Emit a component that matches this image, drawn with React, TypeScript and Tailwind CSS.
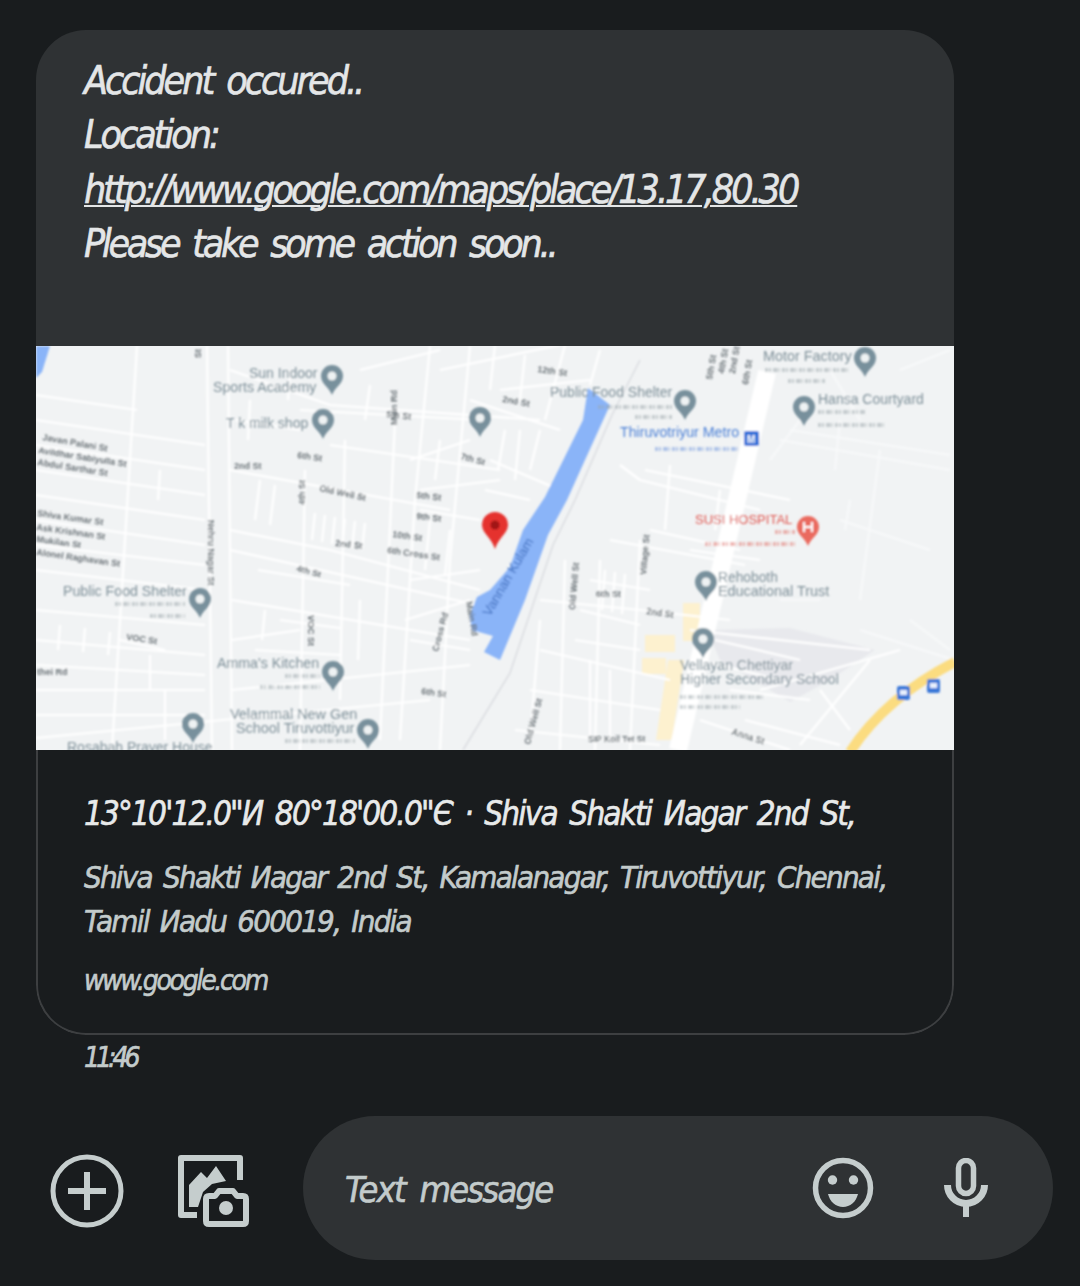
const cond = "font-['DejaVu_Sans','Liberation_Sans',sans-serif] italic [font-stretch:condensed]";

const roads: string[] = [
  "M137 346L112 750", "M207 346L212 750", "M228 346L232 750", "M305 470L300 750", "M345 440L340 700", "M395 420L380 740",
  "M430 346L415 500L400 740", "M470 346L450 560L440 750", "M36 395L137 410", "M36 420L137 435L205 445", "M36 445L205 470", "M36 470L205 495",
  "M36 495L205 520", "M36 520L205 545", "M36 545L205 565", "M36 570L205 590", "M36 610L205 625", "M36 640L205 655", "M36 665L205 675",
  "M36 690L205 690", "M36 715L205 715", "M36 738L430 700", "M230 370L330 405L540 420", "M230 470L450 510", "M230 530L330 550L480 590",
  "M230 550L500 610", "M232 600L470 640", "M232 640L300 630", "M232 690L470 665", "M300 410L480 420", "M330 445L500 470", "M420 510L480 520",
  "M420 490L500 480", "M410 580L480 570", "M405 620L470 600", "M440 370L560 345", "M500 390L590 380", "M470 400L560 430", "M490 460L560 490",
  "M565 345L545 420", "M600 350L590 385", "M540 600L640 610L730 620", "M540 650L670 680",
  "M530 690L660 710", "M515 730L660 745", "M565 560L560 750", "M600 560L595 750", "M640 540L630 750", "M650 530L740 550", "M610 540L745 565",
  "M580 610L640 625", "M620 465L640 480L760 510", "M670 465L665 530", "M720 490L715 530", "M690 630L870 650", "M715 640L800 660",
  "M760 690L900 650", "M800 745L870 660", "M730 690L810 700", "M700 720L790 750",
  "M160 470L158 500", "M120 640L165 650", "M60 625L58 650", "M85 628L83 652", "M110 632L108 655", "M150 655L150 690", "M165 690L165 740",
  "M315 513L312 540", "M325 515L322 542", "M335 517L332 544", "M345 519L342 546", "M355 521L352 548", "M365 523L362 550",
  "M260 480L255 520", "M275 485L270 525", "M258 570L350 585", "M265 610L262 640", "M280 620L340 628", "M255 650L340 655", "M360 600L358 660", "M410 640L470 650",
  "M430 520L425 570", "M450 530L445 575", "M235 420L300 430", "M250 400L248 440", "M290 370L288 400", "M360 370L440 350", "M370 385L365 420", "M410 460L470 440",
  "M440 440L435 480", "M495 345L490 390", "M525 355L520 400", "M505 430L498 470", "M520 430L515 480", "M540 430L530 470", "M485 490L530 500",
  "M590 580L650 590", "M605 570L602 610", "M615 572L612 612", "M625 574L622 614", "M575 640L640 650", "M590 660L590 740", "M610 670L610 740",
  "M540 620L530 740", "M690 550L760 560", "M645 470L790 500", "M745 720L840 745", "M820 690L850 730", "M700 660L780 680",
];
const faint: string[] = [
  "M780 440L950 470", "M790 430L950 455", "M880 450L860 600", "M840 520L930 550", "M780 600L820 600", "M900 370L950 350", "M910 620L950 650",
  "M830 370L860 420", "M850 500L845 530", "M770 460L800 420", "M840 420L835 470", "M860 630L954 660",
];
const tamil: [number, number, number, string?][] = [
  [115, 604, 70], [150, 616, 35], [285, 676, 35], [260, 687, 60], [285, 741, 70],
  [598, 407, 74], [635, 417, 37], [765, 370, 85], [788, 381, 37], [818, 412, 47], [818, 425, 67],
  [655, 449, 85, "#6d94dc"], [775, 532, 20, "#e0726a"], [705, 544, 90, "#e0726a"], [680, 697, 85], [680, 707, 60],
];

function Pin({ x, y, color = "#78909c", glyph }: { x: number; y: number; color?: string; glyph?: string }) {
  return (
    <g>
      <path d={`M${x} ${y + 19}C${x - 3} ${y + 11} ${x - 11} ${y + 8} ${x - 11} ${y}A11 11 0 0 1 ${x + 11} ${y}C${x + 11} ${y + 8} ${x + 3} ${y + 11} ${x} ${y + 19}Z`} fill={color} />
      {glyph === "H" ? (
        <path d={`M${x - 4} ${y - 5}V${y + 5}M${x + 4} ${y - 5}V${y + 5}M${x - 4} ${y}H${x + 4}`} stroke="#fff" strokeWidth="2" fill="none" />
      ) : (
        <circle cx={x} cy={y} r="4.5" fill="#eef2f3" />
      )}
    </g>
  );
}

type L = [number, number, string, number?, string?, number?];
const labels: L[] = [
  [249, 378, "Sun Indoor", 14],
  [213, 392, "Sports Academy", 14.2],
  [226, 428, "T k milk shop", 14],
  [63, 596, "Public Food Shelter", 14.2],
  [217, 668, "Amma's Kitchen", 14.2],
  [230, 719, "Velammal New Gen", 14.4],
  [236, 733, "School Tiruvottiyur", 14.4],
  [67, 752, "Rosabah Prayer House", 14],
  [550, 397, "Public Food Shelter", 14],
  [763, 361, "Motor Factory", 14.4],
  [818, 404, "Hansa Courtyard", 14],
  [620, 437, "Thiruvotriyur Metro", 14.2, "#4a7fd6"],
  [695, 524, "SUSI HOSPITAL", 13, "#e0564f"],
  [718, 582, "Rehoboth", 13.8],
  [718, 596, "Educational Trust", 14.4],
  [680, 670, "Vellayan Chettiyar", 14],
  [680, 684, "Higher Secondary School", 14],
];
const tiny: L[] = [
  [42, 440, "Javan Palani St", 9, "#6b7378", 10],
  [38, 453, "Avildhar Sabiyulla St", 9, "#6b7378", 9],
  [37, 465, "Abdul Sarthar St", 9, "#6b7378", 9],
  [37, 516, "Shiva Kumar St", 9, "#6b7378", 8],
  [36, 530, "Ask Krishnan St", 9, "#6b7378", 8],
  [36, 542, "Mukilan St", 9, "#6b7378", 8],
  [36, 555, "Alonel Raghavan St", 9, "#6b7378", 8],
  [234, 469, "2nd St", 9],
  [297, 458, "6th St", 9, "#6b7378", 8],
  [386, 417, "5th St", 9, "#6b7378", 6],
  [319, 491, "Old Well St", 9, "#6b7378", 12],
  [416, 498, "5th St", 9, "#6b7378", 6],
  [416, 519, "9th St", 9, "#6b7378", 6],
  [392, 537, "10th St", 9, "#6b7378", 8],
  [387, 553, "6th Cross St", 9, "#6b7378", 8],
  [335, 546, "2nd St", 9, "#6b7378", 6],
  [296, 571, "4th St", 9, "#6b7378", 15],
  [126, 640, "VOC St", 9, "#6b7378", 8],
  [37, 675, "thei Rd", 9],
  [421, 694, "6th St", 9, "#6b7378", 8],
  [460, 459, "7th St", 9, "#6b7378", 15],
  [502, 402, "2nd St", 9, "#6b7378", 10],
  [537, 372, "12th St", 9, "#6b7378", 8],
  [596, 597, "6th St", 9],
  [646, 614, "2nd St", 9, "#6b7378", 8],
  [588, 742, "SIP Koil Tet St", 8.5],
  [731, 734, "Anna St", 9, "#6b7378", 18],
];
const vert: [number, number, string, number?][] = [
  [208, 520, "Nehru Nagar St", 90],
  [397, 425, "Main Rd", -90],
  [305, 505, "4th St", -90],
  [308, 615, "VOC St", 90],
  [438, 652, "Cross Rd", -75],
  [466, 602, "Main Rd", 80],
  [575, 610, "Old Well St", -85],
  [646, 575, "Village St", -85],
  [530, 745, "Old Well St", -75],
  [201, 358, "St", -90],
  [712, 380, "5th St", -80],
  [724, 374, "4th St", -80],
  [735, 374, "2nd St", -80],
  [748, 385, "6th St", -80],
];

function MapView() {
  return (
    <svg viewBox="36 346 918 404" className="block w-[918px] h-[404px] not-italic [font-stretch:normal] [-webkit-text-stroke:0] font-['Liberation_Sans',sans-serif]">
      <defs>
        <filter id="soft"><feGaussianBlur stdDeviation="0.8" /></filter>
      </defs>
      <rect x="36" y="346" width="918" height="404" fill="#f1f3f4" />
      <g filter="url(#soft)">
        <path d="M707 630L790 628L875 650L830 680L790 702L720 660Z" fill="#e8e9ed" />
        <rect x="683" y="603" width="17" height="38" fill="#fdf1cf" />
        <rect x="645" y="635" width="30" height="17" fill="#fdf1cf" />
        <rect x="642" y="658" width="24" height="16" fill="#fdf1cf" />
        <path d="M668 660L684 660L672 740L656 740Z" fill="#fdf1cf" />
        <g stroke="#fff" strokeWidth="2.2" fill="none" strokeLinejoin="round">
          {roads.map((d) => <path key={d} d={d} />)}
        </g>
        <g stroke="#f8f9fa" strokeWidth="2" fill="none">
          {faint.map((d) => <path key={d} d={d} />)}
        </g>
        <path d="M767 372L678 750" stroke="#fff" strokeWidth="18" fill="none" />
        <path d="M640 360L612 415L575 500L553 545L510 673L463 750" stroke="#dadce0" strokeWidth="1.5" fill="none" />
        <path d="M850 752Q885 698 955 662" stroke="#fbdc80" strokeWidth="10" fill="none" />
        <path d="M36 346H50L42 372L36 378Z" fill="#8ab4f8" />
        <path d="M588 388L610 405L585 460L567 500L548 535L525 600L500 660L484 652L493 636L472 630L470 615L477 597L490 590L510 567L523 530L545 497L583 420Z" fill="#8ab4f8" />
        <text x="0" y="0" transform="translate(490 617) rotate(-60)" fontSize="13.5" fill="#3f6fbf">Vannan Kulam</text>
        {tamil.map(([x, y, w, c]) => (
          <path key={`${x}-${y}`} d={`M${x} ${y}h${w}`} stroke={c ?? "#9aa5aa"} strokeWidth="4" strokeDasharray="3 1 2 2 5 1 1 2" opacity="0.5" fill="none" />
        ))}
        {labels.map(([x, y, t, s, c]) => (
          <text key={t + x} x={x} y={y} fontSize={s} fill={c ?? "#7d8f98"}>{t}</text>
        ))}
        {tiny.map(([x, y, t, s, c, r]) => (
          <text key={t + x} x={x} y={y} fontSize={s} fontWeight="700" fill={c ?? "#6b7378"} transform={r ? `rotate(${r} ${x} ${y})` : undefined}>{t}</text>
        ))}
        {vert.map(([x, y, t, r]) => (
          <text key={t + x} x={x} y={y} fontSize="9" fontWeight="700" fill="#6b7378" transform={`rotate(${r} ${x} ${y})`}>{t}</text>
        ))}
        <Pin x={332} y={376} />
        <Pin x={323} y={420} />
        <Pin x={480} y={418} />
        <Pin x={200} y={599} />
        <Pin x={333} y={672} />
        <Pin x={193} y={724} />
        <Pin x={368} y={730} />
        <Pin x={685} y={401} />
        <Pin x={865} y={358} />
        <Pin x={804} y={407} />
        <Pin x={808} y={527} color="#ea6a5e" glyph="H" />
        <Pin x={706} y={582} />
        <Pin x={703} y={639} />
        <rect x="744" y="431" width="15" height="15" rx="2" fill="#2f6fd8" />
        <text x="747" y="443" fontSize="10" fontWeight="700" fill="#fff">M</text>
        <rect x="897" y="686" width="13" height="14" rx="2" fill="#3b78d8" />
        <rect x="927" y="679" width="13" height="14" rx="2" fill="#3b78d8" />
        <rect x="900" y="690" width="7" height="5" fill="#e8f0fe" />
        <rect x="930" y="683" width="7" height="5" fill="#e8f0fe" />
        <path d="M495 549C491 537 482 533 482 525A13 13 0 0 1 508 525C508 533 499 537 495 549Z" fill="#e5322d" />
        <circle cx="495" cy="525" r="4.5" fill="#a01414" />
      </g>
    </svg>
  );
}

function PlusIcon() {
  return (
    <svg viewBox="0 0 74 74" className="w-[74px] h-[74px] shrink-0" fill="none" stroke="#c5cdcd">
      <circle cx="37" cy="37" r="34" strokeWidth="5" />
      <path d="M37 18V56M18 37H56" strokeWidth="6" />
    </svg>
  );
}

function GalleryIcon() {
  return (
    <svg viewBox="176 1152 76 78" className="w-[76px] h-[78px] shrink-0" fill="none" stroke="#c5cdcd">
      <path d="M240 1180V1158H181V1215H197" strokeWidth="6" strokeLinejoin="round" />
      <path d="M189 1207V1185L201 1172L207 1178L216 1166L226 1181L212 1184L203 1192L198 1207Z" fill="#c5cdcd" stroke="none" />
      <path d="M206 1199Q206 1196 209 1196H215L219 1191H233L237 1196H243Q246 1196 246 1199V1221Q246 1224 243 1224H209Q206 1224 206 1221Z" strokeWidth="6" strokeLinejoin="round" />
      <circle cx="226" cy="1208" r="7" fill="#c5cdcd" stroke="none" />
    </svg>
  );
}

function SmileIcon() {
  return (
    <svg viewBox="0 0 62 62" className="w-[62px] h-[62px] shrink-0" fill="none">
      <circle cx="31" cy="31" r="27.5" stroke="#c5cdcd" strokeWidth="5.5" />
      <circle cx="20.5" cy="23" r="4.7" fill="#c5cdcd" />
      <circle cx="41.5" cy="23" r="4.7" fill="#c5cdcd" />
      <path d="M16 37H46C44 45 38 50 31 50C24 50 18 45 16 37Z" fill="#c5cdcd" />
    </svg>
  );
}

function MicIcon() {
  return (
    <svg viewBox="0 0 44 60" className="w-[44px] h-[60px] shrink-0" fill="none" stroke="#c5cdcd">
      <rect x="14.5" y="2.5" width="15" height="33" rx="7.5" strokeWidth="5.5" />
      <path d="M3.5 27A18.5 18.5 0 0 0 40.5 27" strokeWidth="7" />
      <path d="M22 44V59" strokeWidth="6" />
    </svg>
  );
}

export default function App() {
  return (
    <div className={`${cond} w-[1080px] h-[1286px] overflow-hidden bg-[#191c1e] pt-[30px] [-webkit-text-stroke:0.6px]`}>
      <div className="ml-[36px] w-[918px] rounded-[50px] overflow-hidden">
        <div className="h-[316px] bg-[#2f3234] pl-[48px] pt-[24px] text-[39px] leading-[54.3px] text-[#e4e6e7] tracking-[-3px] [word-spacing:6px]">
          <div>Accident occured..</div>
          <div>Location:</div>
          <div className="underline underline-offset-[2px] decoration-[2px]">http://www.google.com/maps/place/13.17,80.30</div>
          <div className="tracking-[-3.25px]">Please take some action soon..</div>
        </div>
        <MapView />
        <div className="h-[285px] rounded-b-[50px] border-2 border-t-0 border-[#3d3f41] pl-[46px] pt-[42px]">
          <div className="text-[33px] leading-[44px] text-[#e8eaea] tracking-[-1.85px] [word-spacing:5px]">13°10'12.0"И 80°18'00.0"Є · Shiva Shakti Иagar 2nd St,</div>
          <div className="mt-[19px] text-[31px] leading-[44px] text-[#c3cbcb] tracking-[-1.76px] [word-spacing:4px]">
            <div>Shiva Shakti Иagar 2nd St, Kamalanagar, Tiruvottiyur, Chennai,</div>
            <div>Tamil Иadu 600019, India</div>
          </div>
          <div className="mt-[16px] text-[28px] leading-[44px] text-[#c3cbcb] tracking-[-2.3px]">www.google.com</div>
        </div>
      </div>
      <div className="ml-[84px] mt-[5px] text-[28px] leading-[36px] text-[#c3cbcb] tracking-[-4px]">11:46</div>
      <div className="mt-[40px] flex items-center pl-[50px]">
        <div className="mt-[6px]"><PlusIcon /></div>
        <div className="ml-[52px] mt-[6px]"><GalleryIcon /></div>
        <div className="ml-[51px] flex h-[144px] w-[750px] items-center rounded-[72px] bg-[#2f3234] pl-[42px]">
          <span className="pt-[4px] text-[36px] text-[#c3cbcb] tracking-[-1.8px] [word-spacing:6px]">Text message</span>
          <div className="ml-auto flex items-center gap-[70px] pr-[65px]">
            <SmileIcon />
            <MicIcon />
          </div>
        </div>
      </div>
    </div>
  );
}
